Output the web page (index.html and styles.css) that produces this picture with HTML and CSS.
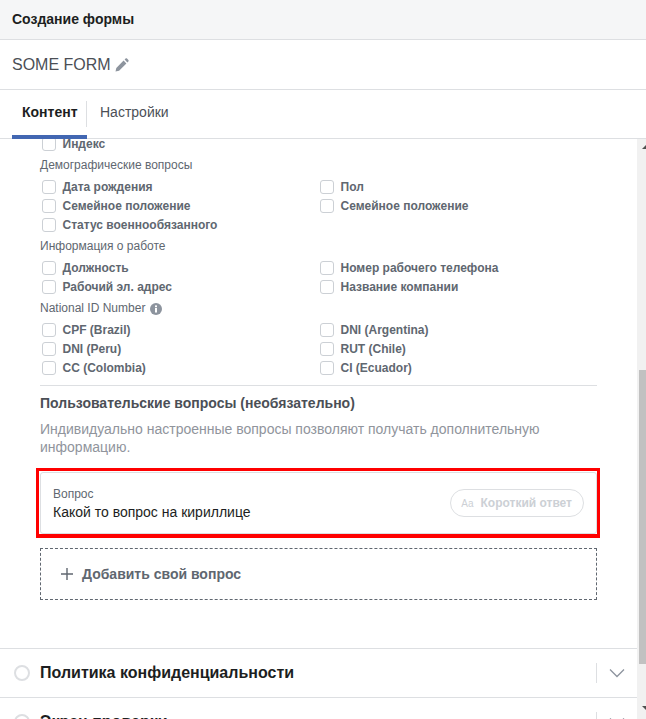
FILE: index.html
```html
<!DOCTYPE html>
<html lang="ru">
<head>
<meta charset="utf-8">
<title>Создание формы</title>
<link rel="stylesheet" href="styles.css">
</head>
<body>
<div class="page">
  <header class="head">Создание формы</header>
  <div class="name-row">
    <span class="form-name">SOME FORM</span>
    <svg class="pencil" width="14" height="14" viewBox="0 0 14 14"><path d="M0.5 13.5l0.8-3.6 7.3-7.3 2.8 2.8-7.3 7.3zM9.6 1.6l1-1c.4-.4 1-.4 1.4 0l1.4 1.4c.4.4.4 1 0 1.4l-1 1z" fill="#8d949e"/></svg>
  </div>
  <nav class="tabs">
    <div class="tab tab-active">Контент</div>
    <div class="tab">Настройки</div>
  </nav>
  <div class="body">
    <div class="pane">
      <div class="content">
        <div class="grid first">
          <label class="check"><i class="box"></i>Индекс</label>
        </div>
        <div class="group">Демографические вопросы</div>
        <div class="grid">
          <label class="check"><i class="box"></i>Дата рождения</label>
          <label class="check"><i class="box"></i>Пол</label>
          <label class="check"><i class="box"></i>Семейное положение</label>
          <label class="check"><i class="box"></i>Семейное положение</label>
          <label class="check"><i class="box"></i>Статус военнообязанного</label>
        </div>
        <div class="group">Информация о работе</div>
        <div class="grid">
          <label class="check"><i class="box"></i>Должность</label>
          <label class="check"><i class="box"></i>Номер рабочего телефона</label>
          <label class="check"><i class="box"></i>Рабочий эл. адрес</label>
          <label class="check"><i class="box"></i>Название компании</label>
        </div>
        <div class="group">National ID Number
          <svg class="info" width="12" height="12" viewBox="0 0 12 12"><circle cx="6" cy="6" r="6" fill="#8d949e"/><rect x="5" y="5" width="2" height="4.5" fill="#fff"/><rect x="5" y="2.4" width="2" height="1.8" fill="#fff"/></svg>
        </div>
        <div class="grid">
          <label class="check"><i class="box"></i>CPF (Brazil)</label>
          <label class="check"><i class="box"></i>DNI (Argentina)</label>
          <label class="check"><i class="box"></i>DNI (Peru)</label>
          <label class="check"><i class="box"></i>RUT (Chile)</label>
          <label class="check"><i class="box"></i>CC (Colombia)</label>
          <label class="check"><i class="box"></i>CI (Ecuador)</label>
        </div>
        <hr class="rule">
        <h2 class="sec-title">Пользовательские вопросы (необязательно)</h2>
        <p class="sec-desc">Индивидуально настроенные вопросы позволяют получать дополнительную информацию.</p>
        <div class="highlight">
          <div class="card">
            <div class="q">
              <div class="q-label">Вопрос</div>
              <div class="q-text">Какой то вопрос на кириллице</div>
            </div>
            <div class="pill"><span class="aa">Aa</span>Короткий ответ</div>
          </div>
        </div>
        <div class="add">
          <svg class="plus" width="12" height="12" viewBox="0 0 12 12"><path d="M6 0v12M0 6h12" stroke="#606770" stroke-width="1.4" fill="none"/></svg>
          Добавить свой вопрос
        </div>
      </div>
      <section class="acc">
        <i class="radio"></i><span class="acc-title">Политика конфиденциальности</span>
        <span class="acc-side"><svg width="16" height="10" viewBox="0 0 16 10"><path d="M1 1.5l7 7 7-7" stroke="#8d949e" stroke-width="1.3" fill="none"/></svg></span>
      </section>
      <section class="acc">
        <i class="radio"></i><span class="acc-title">Экран проверки</span>
        <span class="acc-side"><svg width="16" height="10" viewBox="0 0 16 10"><path d="M1 1.5l7 7 7-7" stroke="#8d949e" stroke-width="1.3" fill="none"/></svg></span>
      </section>
    </div>
    <div class="scrollbar">
      <svg class="arrow" width="9" height="9" viewBox="0 0 9 9"><path d="M5 6L9 2v4z" fill="#505050"/></svg>
      <div class="thumb"></div>
      <svg class="arrow arrow-down" width="9" height="9" viewBox="0 0 9 9"><path d="M5 0h4v4z" fill="#505050"/></svg>
    </div>
  </div>
</div>
</body>
</html>
```
FILE: styles.css
```css
* { box-sizing: border-box; }
html, body { margin: 0; height: 100%; overflow: hidden; background: #fff; }
body { font-family: "Liberation Sans", Arial, sans-serif; color: #1c1e21; }
.page { width: 646px; height: 719px; display: flex; flex-direction: column; overflow: hidden; }
.head { height: 40px; flex: none; padding-left: 12px; background: #f5f6f7; border-bottom: 1px solid #dddfe2; font-size: 14px; font-weight: 700; line-height: 39px; color: #1c1e21; }
.name-row { height: 50px; flex: none; padding-left: 12px; display: flex; align-items: center; gap: 4px; border-bottom: 1px solid #dddfe2; }
.form-name { font-size: 16px; color: #4b4f56; }
.pencil { margin-top: 1px; }
.tabs { height: 49px; flex: none; padding-left: 12px; display: flex; border-bottom: 1px solid #dddfe2; }
.tab { padding: 0 13px; font-size: 14px; line-height: 45px; color: #4b4f56; }
.tab-active { width: 75px; padding: 0 0 0 10px; margin-bottom: -1px; font-weight: 700; color: #1c1e21; border-bottom: 4px solid #4267b2; position: relative; }
.tab-active::after { content: ""; position: absolute; right: 0; top: 11px; height: 26px; width: 1px; background: #dddfe2; }
.body { flex: 1; min-height: 0; display: flex; }
.pane { flex: 1; min-width: 0; overflow: hidden; }
.content { padding: 0 40px; height: 514px; }
.grid { display: grid; grid-template-columns: 278px 1fr; padding-left: 2px; }
.first { margin-top: -5px; }
.check { height: 19px; display: flex; align-items: center; gap: 6.5px; font-size: 12px; font-weight: 700; color: #606770; }
.box { width: 14px; height: 14px; flex: none; border: 1px solid #ccd0d5; border-radius: 3px; background: #fff; }
.group { height: 19px; margin: 3px 0 2px; font-size: 12px; line-height: 19px; color: #606770; display: flex; align-items: center; gap: 5px; }
.info { flex: none; }
.rule { height: 1px; margin: 8px 0 0; border: 0; background: #dddfe2; }
.sec-title { margin: 8px 0 0; font-size: 14px; line-height: 18px; font-weight: 700; color: #4b4f56; }
.sec-desc { margin: 8px 0 0; font-size: 14px; line-height: 18px; color: #90949c; }
.highlight { margin: 12px -3px 0 -4px; padding: 1px 0 0 1px; height: 70px; border: solid #f00; border-width: 3px 3px 4px 3px; }
.card { height: 62px; padding: 0 12px; border: 1px solid #dddfe2; border-radius: 3px; display: flex; align-items: center; justify-content: space-between; }
.q-label { font-size: 12px; line-height: 16px; color: #606770; }
.q-text { margin-top: 1px; font-size: 14px; line-height: 18px; color: #1c1e21; }
.pill { height: 28px; padding: 0 11px 0 10px; border: 1px solid #dddfe2; border-radius: 14px; display: flex; align-items: center; font-size: 12px; font-weight: 700; color: #ccd0d5; }
.aa { margin-right: 7px; font-size: 10px; font-weight: 400; }
.add { height: 52px; margin-top: 10px; padding-left: 20px; border: 1px dashed #606770; display: flex; align-items: center; gap: 9px; font-size: 14px; font-weight: 700; color: #606770; }
.acc { height: 49px; padding-left: 14px; border-top: 1px solid #dddfe2; display: flex; align-items: center; }
.radio { width: 16px; height: 16px; flex: none; border: 2px solid #dddfe2; border-radius: 50%; margin-right: 10px; }
.acc-title { flex: 1; font-size: 16px; font-weight: 700; color: #1c1e21; }
.acc-side { width: 41px; height: 20px; border-left: 1px solid #dddfe2; display: flex; align-items: center; justify-content: center; }
.scrollbar { width: 9px; flex: none; background: #f1f1f1; display: flex; flex-direction: column; overflow: hidden; }
.arrow { flex: none; margin-top: 4px; }
.thumb { height: 294px; margin: 218px 0 0 2px; background: #c1c1c1; flex: none; }
.arrow-down { margin-top: auto; margin-bottom: 4px; }
```
